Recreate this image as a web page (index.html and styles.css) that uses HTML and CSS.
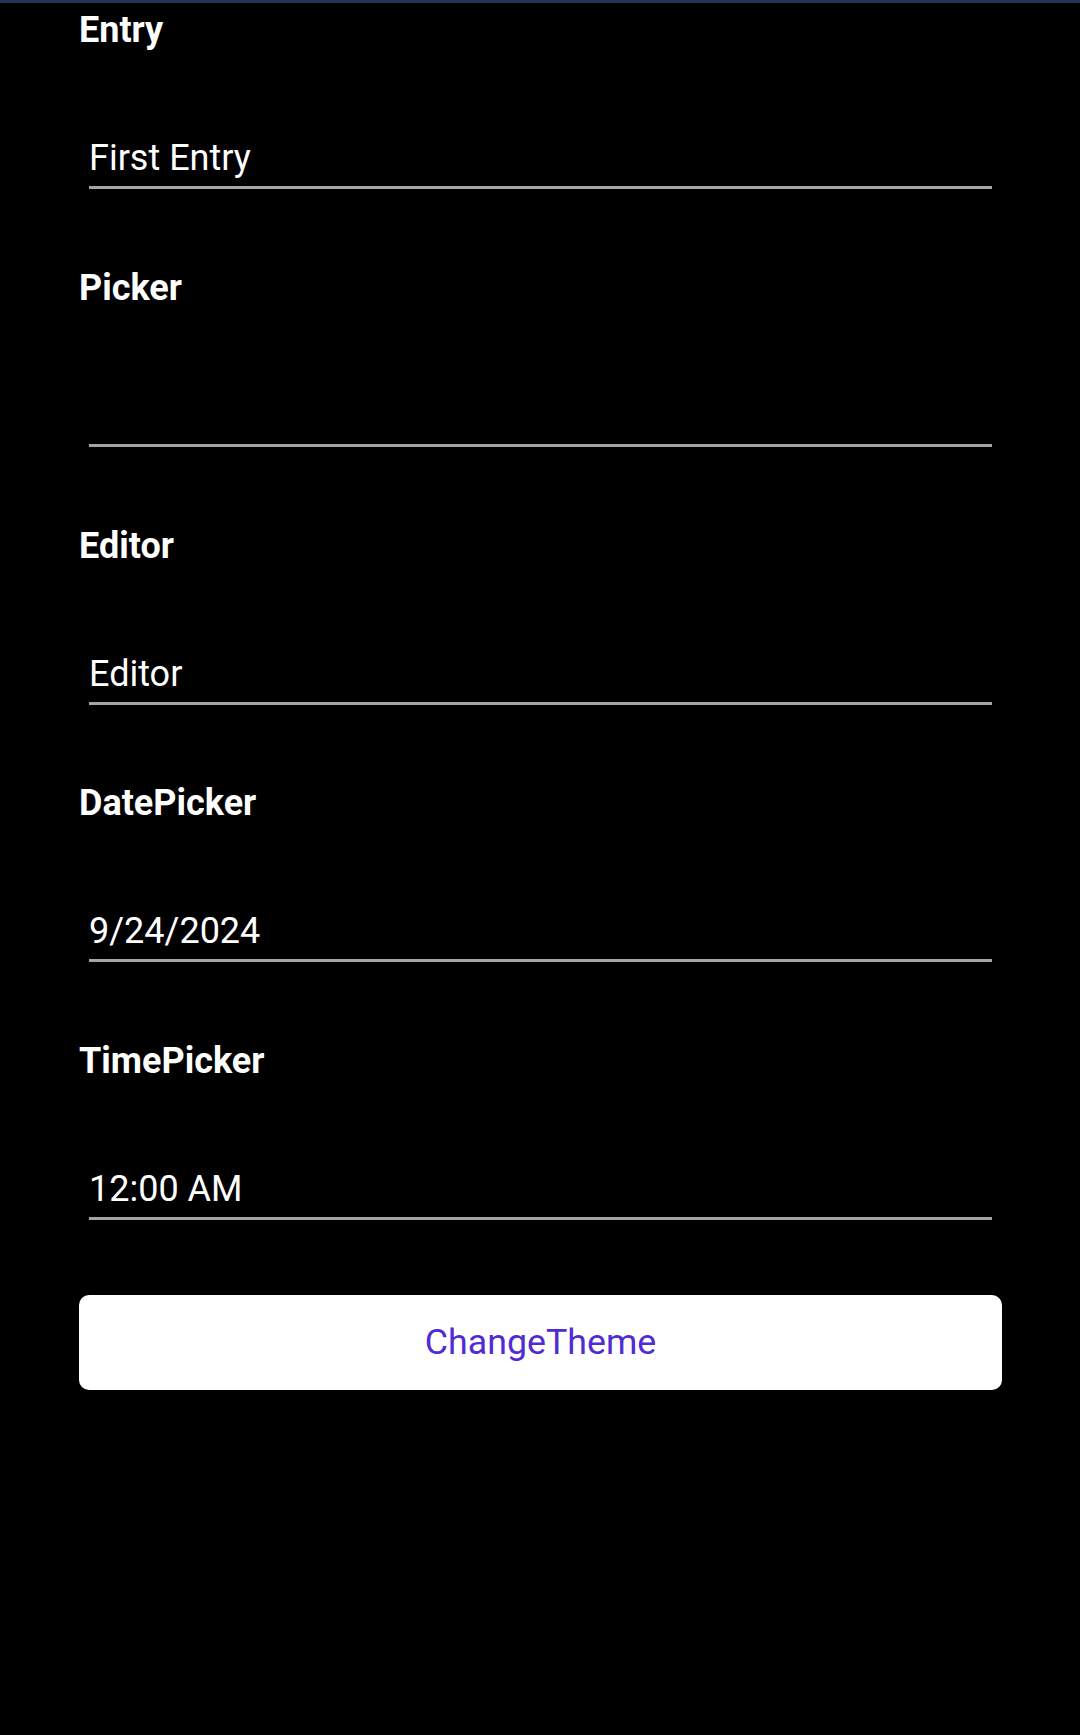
FILE: index.html
```html
<!DOCTYPE html>
<html lang="en">
<head>
<meta charset="utf-8">
<title>Controls</title>
<link rel="stylesheet" href="styles.css">
</head>
<body>
<div class="topbar"></div>
<main class="page">
  <section class="field">
    <div class="label">Entry</div>
    <div class="control">First Entry</div>
  </section>
  <section class="field">
    <div class="label">Picker</div>
    <div class="control"></div>
  </section>
  <section class="field">
    <div class="label">Editor</div>
    <div class="control">Editor</div>
  </section>
  <section class="field">
    <div class="label">DatePicker</div>
    <div class="control">9/24/2024</div>
  </section>
  <section class="field">
    <div class="label">TimePicker</div>
    <div class="control">12:00 AM</div>
  </section>
  <button class="btn" type="button">ChangeTheme</button>
</main>
</body>
</html>
```
FILE: styles.css
```css
html, body {
  margin: 0;
  padding: 0;
  background: #000;
}
body {
  width: 1080px;
  height: 1735px;
  overflow: hidden;
  font-family: Roboto, "Noto Sans", sans-serif;
  color: #fff;
}
.topbar {
  height: 3px;
  background: #1f3550;
}
.page {
  display: flex;
  flex-direction: column;
  gap: 71.75px;
  padding: 0 78px 0 79px;
}
.field {
  display: flex;
  flex-direction: column;
}
.label {
  font-weight: 700;
  font-size: 36px;
  line-height: 54px;
  height: 54px;
}
.control {
  margin: 78px 10px 0 10px;
  font-size: 36px;
  line-height: 46px;
  min-height: 46px;
  padding-bottom: 5px;
  border-bottom: 3px solid #a4a4a4;
}
.btn {
  margin-top: 3px;
  height: 95px;
  border: none;
  border-radius: 10px;
  background: #fff;
  color: #512bd4;
  font-family: Roboto, "Noto Sans", sans-serif;
  font-size: 35.75px;
  padding: 0;
  cursor: pointer;
}
```
